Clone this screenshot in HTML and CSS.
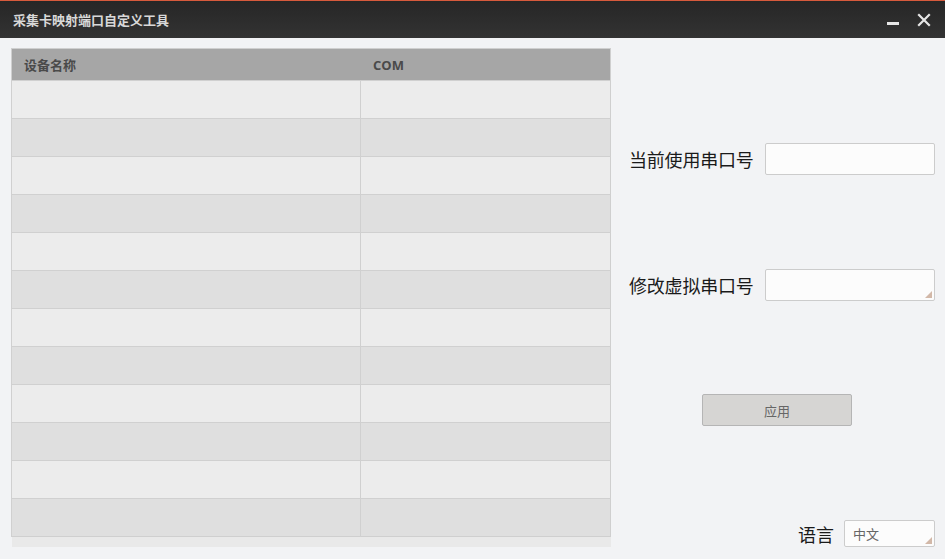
FILE: index.html
```html
<!DOCTYPE html>
<html lang="zh-CN">
<head>
  <meta charset="UTF-8">
  <meta name="viewport" content="width=device-width, initial-scale=1.0">
  <title>采集卡映射端口自定义工具</title>
  <link rel="stylesheet" href="styles.css">
</head>
<body>
  <div class="window">
    <div class="titlebar">
      <span class="title">采集卡映射端口自定义工具</span>
      <div class="win-buttons">
        <span class="btn-min"></span>
        <svg class="btn-close" width="14" height="14" viewBox="0 0 14 14">
          <path d="M2 2 L12 12 M12 2 L2 12" stroke="#e6e6e6" stroke-width="2.2" stroke-linecap="square"/>
        </svg>
      </div>
    </div>
    <div class="main">
      <div class="table-wrap">
        <table class="grid">
          <thead>
            <tr><th class="col-name">设备名称</th><th class="col-com">COM</th></tr>
          </thead>
          <tbody>
            <tr><td></td><td></td></tr>
            <tr><td></td><td></td></tr>
            <tr><td></td><td></td></tr>
            <tr><td></td><td></td></tr>
            <tr><td></td><td></td></tr>
            <tr><td></td><td></td></tr>
            <tr><td></td><td></td></tr>
            <tr><td></td><td></td></tr>
            <tr><td></td><td></td></tr>
            <tr><td></td><td></td></tr>
            <tr><td></td><td></td></tr>
            <tr><td></td><td></td></tr>
          </tbody>
        </table>
        <div class="hscroll"></div>
      </div>
      <div class="side">
        <div class="field field-current">
          <label for="current">当前使用串口号</label>
          <input type="text" id="current" class="box">
        </div>
        <div class="field field-virtual">
          <label for="virtual">修改虚拟串口号</label>
          <div class="box grip-box"><span class="grip"></span></div>
        </div>
        <button class="apply">应用</button>
        <div class="lang">
          <span class="lang-label">语言</span>
          <div class="lang-box">中文<span class="grip"></span></div>
        </div>
      </div>
    </div>
  </div>
</body>
</html>
```

FILE: styles.css
```css
body {
  margin: 0;
  padding: 0;
  background-color: #f2f3f5;
  font-family: "Noto Sans CJK SC", "Liberation Sans", sans-serif;
}

.window {
  width: 945px;
  height: 559px;
  overflow: hidden;
}

.titlebar {
  height: 37px;
  border-top: 1px solid #d65a3c;
  background: linear-gradient(#262626, #333333);
  display: flex;
  align-items: center;
  justify-content: space-between;
  padding: 0 14px 0 13px;
}

.title {
  color: #d8d8d8;
  font-size: 13px;
  font-weight: bold;
}

.win-buttons {
  display: flex;
  align-items: center;
  gap: 18px;
}

.btn-min {
  display: block;
  width: 12px;
  height: 3px;
  margin-top: 8px;
  background-color: #e6e6e6;
}

.main {
  display: flex;
  padding: 10px 10px 0 11px;
}

.table-wrap {
  width: 600px;
}

.grid {
  width: 600px;
  border-collapse: collapse;
  border: 1px solid #cfcfcf;
  table-layout: fixed;
}

.grid th {
  height: 31px;
  padding: 0 0 0 12px;
  background-color: #a6a6a6;
  color: #4a4a4a;
  font-family: "Open Sans", "Noto Sans CJK SC", sans-serif;
  font-size: 13px;
  font-weight: bold;
  text-align: left;
}

.grid th.col-name {
  width: 336px;
}

.grid th.col-com {
  padding-left: 13px;
}

.grid td {
  height: 37px;
  padding: 0;
  border-top: 1px solid #d0d0d0;
  border-left: 1px solid #d0d0d0;
}

.grid tbody tr:nth-child(odd) td {
  background-color: #ececec;
}

.grid tbody tr:nth-child(even) td {
  background-color: #dfdfdf;
}

.hscroll {
  height: 10px;
  margin-left: 1px;
  background-color: #e9e9e9;
}

.side {
  flex: 1;
  padding-left: 18px;
  display: flex;
  flex-direction: column;
}

.field {
  display: flex;
  align-items: center;
  height: 32px;
}

.field label {
  width: 136px;
  font-size: 18px;
  color: #1a1a1a;
  letter-spacing: -0.2px;
}

.box {
  width: 170px;
  height: 32px;
  box-sizing: border-box;
  border: 1px solid #cccccc;
  border-radius: 2px;
  background-color: #fcfcfc;
  margin: 0;
  padding: 0 6px;
}

.field-current {
  margin-top: 95px;
}

.field-virtual {
  margin-top: 94px;
}

.grip-box,
.lang-box {
  position: relative;
}

.grip {
  position: absolute;
  right: 2px;
  bottom: 2px;
  width: 0;
  height: 0;
  border-left: 7px solid transparent;
  border-bottom: 7px solid #d2b8a8;
}

.apply {
  margin: 93px 0 0 73px;
  width: 150px;
  height: 32px;
  background-color: #d6d5d3;
  border: 1px solid #b5b5b5;
  border-radius: 2px;
  color: #666666;
  font-family: inherit;
  font-size: 13px;
}

.lang {
  margin-top: 94px;
  display: flex;
  align-items: center;
  justify-content: flex-end;
  gap: 10px;
}

.lang-label {
  font-size: 18px;
  color: #1a1a1a;
}

.lang-box {
  width: 91px;
  height: 27px;
  box-sizing: border-box;
  border: 1px solid #cccccc;
  border-radius: 2px;
  background-color: #fcfcfc;
  padding-left: 8px;
  font-size: 13px;
  line-height: 25px;
  color: #666666;
}
```
